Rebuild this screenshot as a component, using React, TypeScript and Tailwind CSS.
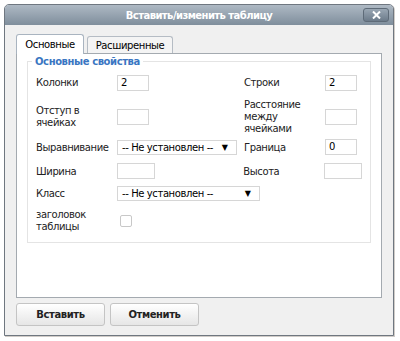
import React from "react";

const font = { fontFamily: '"DejaVu Sans", Verdana, sans-serif' };

const Input = ({ value, w }: { value?: string; w: string }) => (
  <div className={`${w} h-[16px] border border-[#d6d6d6] bg-white text-[10px] leading-[14px] pl-[3px] text-black`}>
    {value}
  </div>
);

const Select = ({ w }: { w: string }) => (
  <div className={`${w} h-[15px] border border-[#d6d6d6] bg-white text-[10px] leading-[13px] pl-[4px] pr-[8px] flex justify-between text-black`}>
    <span>-- Не установлен --</span>
    <span className="text-[8px] tracking-normal">▼</span>
  </div>
);

export default function App() {
  return (
    <div className="w-[400px] h-[341px] bg-white pt-[4px] pl-[4px]" style={font}>
      <div className="w-[390px] h-[332px] border border-[#6f7780] rounded-t-[5px] bg-[#f0f0f0] flex flex-col shadow-[1px_1px_0_#d0ccc8]">
        {/* title bar */}
        <div className="h-[20px] rounded-t-[4px] bg-gradient-to-b from-[#aeb9c4] to-[#7f8e9c] flex items-center relative">
          <div className="flex-1 text-center text-white font-bold text-[10px] tracking-[-0.55px]">
            Вставить/изменить таблицу
          </div>
          <div className="absolute right-[4px] top-[3px] w-[26px] h-[14px] rounded-[3px] border border-[#5e6b78] bg-gradient-to-b from-[#9aa7b4] to-[#6c7b8a] flex items-center justify-center">
            <svg width="9" height="8" viewBox="0 0 9 8">
              <path d="M1 0.5 L8 7.5 M8 0.5 L1 7.5" stroke="white" strokeWidth="2" />
            </svg>
          </div>
        </div>

        <div className="flex-1 flex flex-col px-[11px] pt-[9px] tracking-[-0.4px]">
          {/* tabs */}
          <div className="flex items-end gap-[3px] text-[10px] text-black">
            <div className="h-[20px] w-[68px] bg-white border border-[#a9b4c0] border-b-0 rounded-t-[3px] flex items-center justify-center -mb-[1px] relative z-10">
              Основные
            </div>
            <div className="h-[17px] w-[86px] bg-[#f4f4f4] border border-[#b5bcc4] border-b-0 rounded-t-[3px] flex items-center justify-center">
              Расширенные
            </div>
          </div>

          {/* panel */}
          <div className="h-[245px] bg-white border border-[#a4aab0] px-[10px] pt-[7px]">
            <div className="border border-[#e4e4e4] pl-[8px] pr-[8px] pb-[8px] text-[10px] text-[#222] relative">
              <div className="absolute -top-[8px] left-[4px] bg-white px-[3px] text-[#3a76c2] font-bold text-[10px]">
                Основные свойства
              </div>

              <div className="flex flex-col pt-[12px]">
                {/* row 1 */}
                <div className="flex items-center h-[17px]">
                  <div className="w-[81px]">Колонки</div>
                  <div className="w-[127px]"><Input value="2" w="w-[32px]" /></div>
                  <div className="w-[81px]">Строки</div>
                  <Input value="2" w="w-[32px]" />
                </div>
                {/* row 2 */}
                <div className="flex items-center mt-[8px] h-[36px]">
                  <div className="w-[81px] leading-[12px]">Отступ в<br />ячейках</div>
                  <div className="w-[127px]"><Input w="w-[32px]" /></div>
                  <div className="w-[81px] leading-[12px]">Расстояние<br />между<br />ячейками</div>
                  <Input w="w-[32px]" />
                </div>
                {/* row 3 */}
                <div className="flex items-center mt-[4px] h-[16px]">
                  <div className="w-[81px]">Выравнивание</div>
                  <div className="w-[127px]"><Select w="w-[120px]" /></div>
                  <div className="w-[81px]">Граница</div>
                  <Input value="0" w="w-[32px]" />
                </div>
                {/* row 4 */}
                <div className="flex items-center mt-[8px] h-[16px]">
                  <div className="w-[81px]">Ширина</div>
                  <div className="w-[127px]"><Input w="w-[38px]" /></div>
                  <div className="w-[81px]">Высота</div>
                  <Input w="w-[38px]" />
                </div>
                {/* row 5 */}
                <div className="flex items-center mt-[7px] h-[15px]">
                  <div className="w-[81px]">Класс</div>
                  <Select w="w-[143px]" />
                </div>
                {/* row 6 */}
                <div className="flex items-center mt-[7px] h-[26px]">
                  <div className="w-[84px] leading-[12px]">заголовок<br />таблицы</div>
                  <div className="w-[12px] h-[12px] border border-[#c8c8c8] rounded-[2px] bg-white" />
                </div>
              </div>
            </div>
          </div>

          {/* buttons */}
          <div className="flex gap-[5px] mt-[5px] text-[10px] font-bold text-[#222]">
            <div className="w-[89px] h-[23px] rounded-[3px] border border-[#c4c4c4] bg-gradient-to-b from-white to-[#e6e6e6] flex items-center justify-center">
              Вставить
            </div>
            <div className="w-[89px] h-[23px] rounded-[3px] border border-[#c4c4c4] bg-gradient-to-b from-white to-[#e6e6e6] flex items-center justify-center">
              Отменить
            </div>
          </div>
        </div>
      </div>
    </div>
  );
}
